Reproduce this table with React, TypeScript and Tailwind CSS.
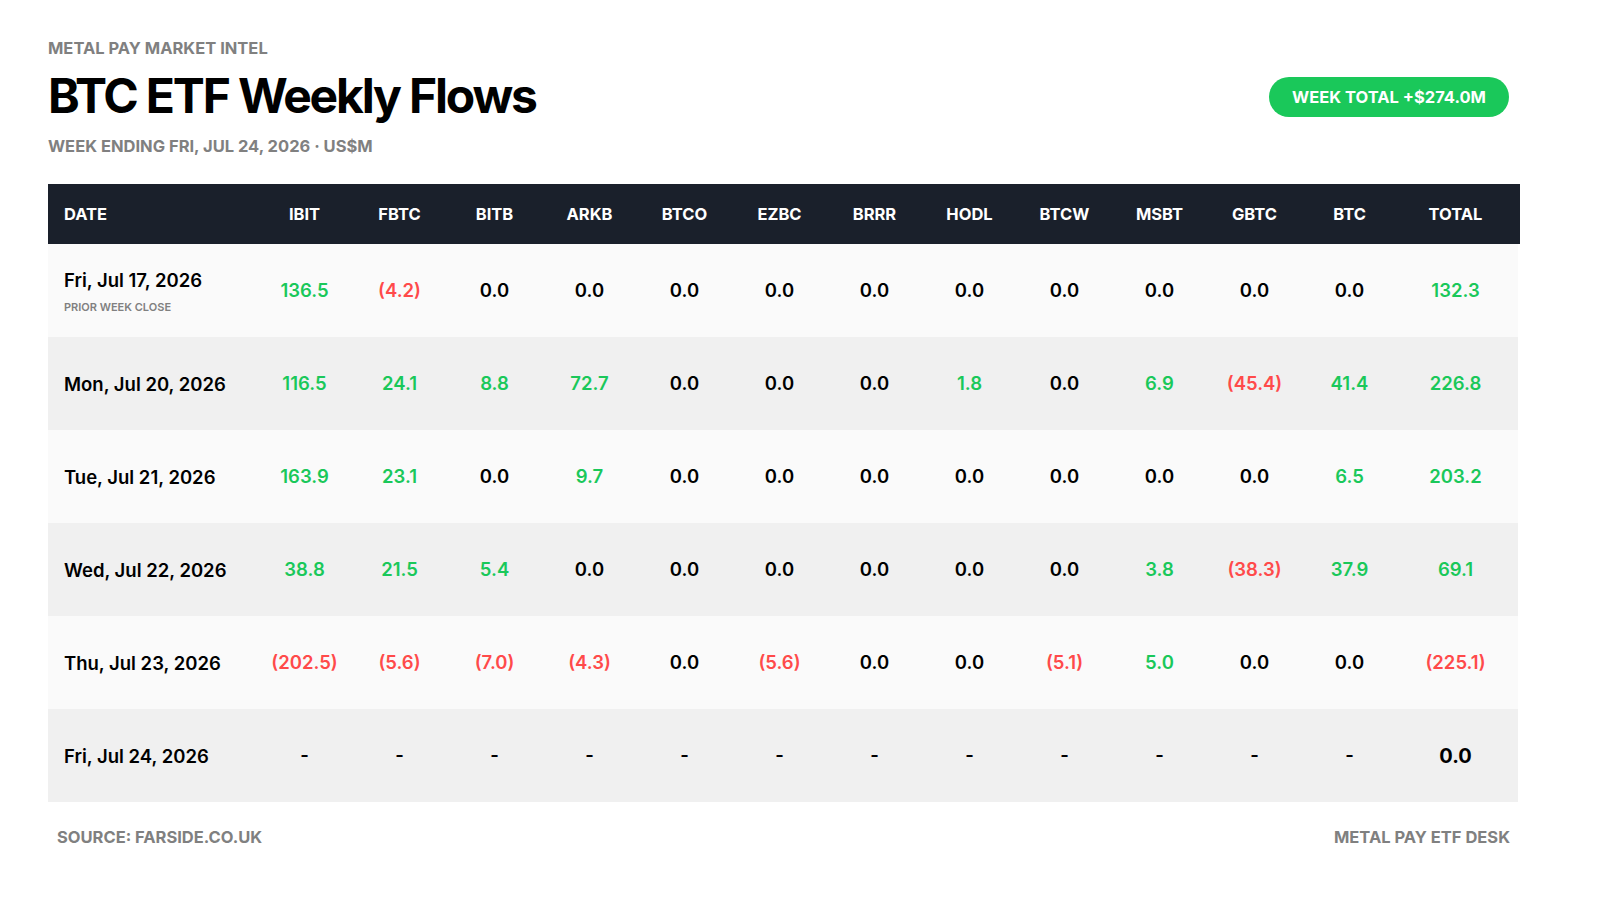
import React from 'react';

type Cell = number | null;

interface FlowRow {
  date: string;
  note?: string;
  values: Cell[];
  total: number;
}

const tickers = ['IBIT', 'FBTC', 'BITB', 'ARKB', 'BTCO', 'EZBC', 'BRRR', 'HODL', 'BTCW', 'MSBT', 'GBTC', 'BTC'];

const rows: FlowRow[] = [
  { date: 'Fri, Jul 17, 2026', note: 'PRIOR WEEK CLOSE', values: [136.5, -4.2, 0, 0, 0, 0, 0, 0, 0, 0, 0, 0], total: 132.3 },
  { date: 'Mon, Jul 20, 2026', values: [116.5, 24.1, 8.8, 72.7, 0, 0, 0, 1.8, 0, 6.9, -45.4, 41.4], total: 226.8 },
  { date: 'Tue, Jul 21, 2026', values: [163.9, 23.1, 0, 9.7, 0, 0, 0, 0, 0, 0, 0, 6.5], total: 203.2 },
  { date: 'Wed, Jul 22, 2026', values: [38.8, 21.5, 5.4, 0, 0, 0, 0, 0, 0, 3.8, -38.3, 37.9], total: 69.1 },
  { date: 'Thu, Jul 23, 2026', values: [-202.5, -5.6, -7.0, -4.3, 0, -5.6, 0, 0, -5.1, 5.0, 0, 0], total: -225.1 },
  { date: 'Fri, Jul 24, 2026', values: [null, null, null, null, null, null, null, null, null, null, null, null], total: 0 },
];

const FlowValue: React.FC<{ value: Cell }> = ({ value }) => {
  if (value === null) return <span className="text-black">-</span>;
  if (value > 0) return <span className="text-[#1ac85a]">{value.toFixed(1)}</span>;
  if (value < 0) return <span className="text-[#ff4a4a]">({Math.abs(value).toFixed(1)})</span>;
  return <span className="text-black">0.0</span>;
};

export default function App() {
  return (
    <div
      className="w-[1600px] h-[900px] bg-white pl-[48px] pt-[38px]"
      style={{ fontFamily: 'Inter, "Liberation Sans", sans-serif' }}
    >
      {/* Heading */}
      <div className="w-[1461px] flex items-center justify-between">
        <div className="flex flex-col">
          <div className="text-[16.5px] leading-5 font-bold text-[#808080]">METAL PAY MARKET INTEL</div>
          <h1 className="mt-[10px] text-[48px] leading-[56px] font-bold text-black tracking-[-0.045em]">BTC ETF Weekly Flows</h1>
          <div className="mt-[12px] text-[16.5px] leading-5 font-bold text-[#808080]">
            WEEK ENDING FRI, JUL 24, 2026 · US$M
          </div>
        </div>
        <div className="h-[40px] px-[23px] rounded-full bg-[#1ac85a] flex items-center text-white text-[16.5px] font-bold">
          WEEK TOTAL +$274.0M
        </div>
      </div>

      {/* Table */}
      <div className="mt-[28px] w-[1472px]">
        <div className="h-[60px] bg-[#1a202b] grid grid-cols-[209px_repeat(12,95px)_1fr] items-center text-white text-[16.5px] font-bold">
          <div className="pl-4">DATE</div>
          {tickers.map(t => (
            <div key={t} className="text-center">{t}</div>
          ))}
          <div className="text-center pr-[6px]">TOTAL</div>
        </div>

        {rows.map((row, i) => (
          <div
            key={row.date}
            className={`h-[93px] mr-[2px] grid grid-cols-[209px_repeat(12,95px)_1fr] items-center text-[18.5px] font-semibold ${
              i % 2 === 0 ? 'bg-[#fafafa]' : 'bg-[#f0f0f0]'
            }`}
          >
            <div className="pl-4 text-black">
              <div className="leading-6">{row.date}</div>
              {row.note && (
                <div className="mt-2 text-[11px] leading-[14px] font-semibold text-[#808080]">{row.note}</div>
              )}
            </div>
            {row.values.map((v, j) => (
              <div key={j} className="text-center">
                <FlowValue value={v} />
              </div>
            ))}
            <div className="text-center pr-[4px]">
              {i === rows.length - 1 ? (
                <span className="text-black text-[20px] font-bold">0.0</span>
              ) : (
                <FlowValue value={row.total} />
              )}
            </div>
          </div>
        ))}
      </div>

      {/* Footer */}
      <div className="mt-[25px] ml-[9px] w-[1453px] flex justify-between text-[16.5px] leading-5 font-bold text-[#808080]">
        <span>SOURCE: FARSIDE.CO.UK</span>
        <span>METAL PAY ETF DESK</span>
      </div>
    </div>
  );
}
